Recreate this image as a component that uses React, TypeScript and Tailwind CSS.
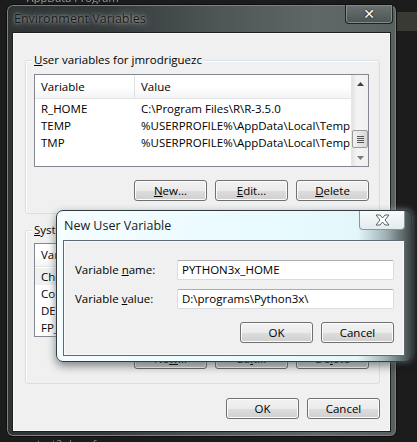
import React from "react";

const font = { fontFamily: '"Segoe UI","Open Sans","Noto Sans",sans-serif' };

function Btn({ children, className = "" }: { children: React.ReactNode; className?: string }) {
  return (
    <div
      className={
        "w-[73px] h-[21px] rounded-[3px] border border-[#707070] flex items-center justify-center text-[11.5px] text-black bg-[linear-gradient(to_bottom,#f2f2f2_0%,#ebebeb_50%,#dddddd_51%,#cfcfcf_100%)] shadow-[inset_0_0_0_1px_#fcfcfc] " +
        className
      }
    >
      {children}
    </div>
  );
}

function ScrollBar() {
  return (
    <div className="w-[17px] h-full flex flex-col bg-[linear-gradient(to_right,#e3e3e3,#f4f4f4_30%,#f0f0f0)] border-l border-[#e6e6e6]">
      <div className="h-[17px] flex items-center justify-center">
        <svg width="7" height="4" viewBox="0 0 7 4">
          <path d="M3.5 0 L7 4 L0 4 Z" fill="#3f3f3f" />
        </svg>
      </div>
      <div className="flex-1 relative">
        <div className="absolute left-[0px] top-[38px] w-[16px] h-[18px] rounded-[2px] border border-[#9a9a9a] bg-[linear-gradient(to_right,#f0f0f0,#e6e6e6_50%,#d6d6d6)] flex flex-col items-center justify-center gap-[1px]">
          <div className="w-[7px] h-[1px] bg-[#555]" />
          <div className="w-[7px] h-[1px] bg-[#555]" />
          <div className="w-[7px] h-[1px] bg-[#555]" />
          <div className="w-[7px] h-[1px] bg-[#555]" />
        </div>
      </div>
      <div className="h-[17px] flex items-center justify-center">
        <svg width="7" height="4" viewBox="0 0 7 4">
          <path d="M0 0 L7 0 L3.5 4 Z" fill="#7a7a7a" />
        </svg>
      </div>
    </div>
  );
}

function ListView({
  rows,
  height,
  firstGrey,
}: {
  rows: [string, string][];
  height: number;
  firstGrey?: boolean;
}) {
  return (
    <div className="w-[335px] border border-[#828790] bg-white flex overflow-hidden" style={{ height }}>
      <div className="flex-1 flex flex-col">
        <div className="h-[24px] flex items-center bg-[linear-gradient(to_bottom,#ffffff,#ffffff_50%,#f3f4f6)] border-b border-[#e5e5e5]">
          <div className="w-[100px] h-full pl-[6px] flex items-center border-r border-[#e0e0e0]">Variable</div>
          <div className="pl-[6px]">Value</div>
        </div>
        <div className="pt-[1px]">
          {rows.map(([a, b], i) => (
            <div key={i} className={"h-[17px] flex items-center " + (firstGrey && i === 0 ? "bg-[#f0f0f0]" : "")}>
              <div className="w-[100px] pl-[6px] whitespace-nowrap overflow-hidden">{a}</div>
              <div className="pl-[6px] whitespace-nowrap">{b}</div>
            </div>
          ))}
        </div>
      </div>
      <ScrollBar />
    </div>
  );
}

function GroupBox({
  label,
  children,
  className = "",
}: {
  label: React.ReactNode;
  children: React.ReactNode;
  className?: string;
}) {
  return (
    <div className={"relative w-[355px] border border-[#d5dfe5] rounded-[3px] shadow-[inset_1px_1px_0_#fff] " + className}>
      <div className="absolute -top-[9px] left-[6px] px-[2px] bg-[#f0f0f0] leading-[16px]">{label}</div>
      {children}
    </div>
  );
}

export default function App() {
  return (
    <div className="relative w-[417px] h-[442px] overflow-hidden bg-[#1c1c1c] text-[11.5px] text-black" style={font}>
      {/* background bits */}
      <div className="absolute left-[20px] -top-[10px] text-[11px] text-[#9a9a9a] blur-[0.4px]">▪ AppData Program</div>
      <div className="absolute left-[397px] top-[12px] w-[20px] h-[19px] bg-[#3a3a34]" />
      <div className="absolute left-[30px] top-[437px] text-[11px] leading-[14px] text-[#8a8a8a] blur-[0.4px]">▪ test2.docx.fc</div>

      {/* main window */}
      <div className="absolute left-[6px] top-[4px] w-[391px] h-[433px] rounded-[7px] border border-[#0e0e0e] bg-[linear-gradient(to_right,#2e3334_0%,#343a3b_25%,#4e5656_55%,#5f6767_80%,#596160_100%)] shadow-[inset_0_0_0_1px_#7a8282] flex flex-col">
        <div className="h-[27px] flex items-center justify-between pl-[7px] pr-[3px]">
          <div className="text-[#1a1a1a] text-[12.5px] mt-[1px] [text-shadow:0_0_8px_rgba(255,255,255,0.55),0_0_3px_rgba(255,255,255,0.6)]">
            Environment Variables
          </div>
          <div className="w-[48px] h-[19px] self-start mt-[0px] rounded-b-[4px] border border-[#1d2222] border-t-0 shadow-[inset_0_0_0_1px_#7f8a8a] bg-[linear-gradient(to_bottom,#6a7272,#4c5454)] flex items-center justify-center">
            <span className="text-white font-bold text-[14px] leading-none [text-shadow:0_0_2px_#000]" style={{ fontFamily: '"DejaVu Sans",sans-serif' }}>
              ✕
            </span>
          </div>
        </div>
        <div className="mx-[5px] h-[400px] border border-[#1e1e1e] bg-[#f0f0f0] shadow-[inset_0_0_0_1px_#fafafa]">
          <div className="pl-[12px]">
            <GroupBox label={<span><u>U</u>ser variables for jmrodriguezc</span>} className="mt-[27px] h-[154px]">
              <div className="pl-[8px] pt-[13px]">
                <ListView
                  height={93}
                  rows={[
                    ["R_HOME", "C:\\Program Files\\R\\R-3.5.0"],
                    ["TEMP", "%USERPROFILE%\\AppData\\Local\\Temp"],
                    ["TMP", "%USERPROFILE%\\AppData\\Local\\Temp"],
                  ]}
                />
                <div className="mt-[13px] flex gap-[8px] pl-[100px]">
                  <Btn><span><u>N</u>ew...</span></Btn>
                  <Btn><span><u>E</u>dit...</span></Btn>
                  <Btn><span><u>D</u>elete</span></Btn>
                </div>
              </div>
            </GroupBox>
            <GroupBox label={<span><u>S</u>ystem variables</span>} className="mt-[16px] h-[154px]">
              <div className="pl-[8px] pt-[12px]">
                <ListView
                  height={94}
                  firstGrey
                  rows={[
                    ["ChocolateyInstall", "C:\\ProgramData\\chocolatey"],
                    ["ComSpec", "C:\\Windows\\system32\\cmd.exe"],
                    ["DEFLOGDIR", "C:\\ProgramData\\McAfee"],
                    ["FP_NO_HOST_CHECK", "NO"],
                  ]}
                />
                <div className="mt-[11px] flex gap-[8px] pl-[100px]">
                  <Btn><span>Ne<u>w</u>...</span></Btn>
                  <Btn><span>Ed<u>i</u>t...</span></Btn>
                  <Btn><span>De<u>l</u>ete</span></Btn>
                </div>
              </div>
            </GroupBox>
            <div className="mt-[14px] flex gap-[8px] pl-[201px]">
              <Btn>OK</Btn>
              <Btn>Cancel</Btn>
            </div>
          </div>
        </div>
      </div>

      {/* New User Variable dialog */}
      <div className="absolute left-[56px] top-[210px] w-[356px] h-[152px] rounded-[7px] border border-[#3a3a3a] bg-[linear-gradient(to_right,#f4fdff_0%,#e9fbff_60%,#e3f7fb_85%,#9fb0b4_93%,#3e4748_100%)] shadow-[0_4px_10px_rgba(0,0,0,0.45),0_0_6px_rgba(200,240,255,0.6)] flex flex-col">
        <div className="h-[29px] flex items-center justify-between pl-[7px] pr-[6px]">
          <div className="text-[12.5px] text-[#1a1a1a] mt-[1px]">New User Variable</div>
          <div className="w-[46px] h-[19px] self-start rounded-b-[4px] border border-[#8a9597] border-t-0 bg-[linear-gradient(to_bottom,#f6fcfd,#e2ecee)] flex items-center justify-center">
            <svg width="17" height="12" viewBox="0 0 17 12">
              <path
                d="M2 1 H6 L8.5 4 L11 1 H15 L11 6 L15 11 H11 L8.5 8 L6 11 H2 L6 6 Z"
                fill="#ffffff"
                stroke="#5b6264"
                strokeWidth="1"
                strokeLinejoin="round"
              />
            </svg>
          </div>
        </div>
        <div className="mx-[6px] h-[116px] border border-[#5e6a72] bg-[#f0f0f0] shadow-[inset_0_0_0_1px_#fafafa]">
          <div className="pl-[11px] pr-[10px] pt-[19px] flex flex-col gap-[9px]">
            <div className="flex items-center justify-between h-[20px]">
              <span>Variable <u>n</u>ame:</span>
              <div className="w-[217px] h-[20px] rounded-[2px] border border-[#dadcde] border-t-[#abadb3] bg-white pl-[4px] flex items-center">
                PYTHON3x_HOME
              </div>
            </div>
            <div className="flex items-center justify-between h-[20px]">
              <span>Variable <u>v</u>alue:</span>
              <div className="w-[217px] h-[20px] rounded-[2px] border border-[#dadcde] border-t-[#abadb3] bg-white pl-[4px] flex items-center">
                D:\programs\Python3x\
              </div>
            </div>
          </div>
          <div className="mt-[13px] flex gap-[8px] pl-[176px]">
            <Btn className="w-[72px]">OK</Btn>
            <Btn className="w-[73px]">Cancel</Btn>
          </div>
        </div>
      </div>
    </div>
  );
}
